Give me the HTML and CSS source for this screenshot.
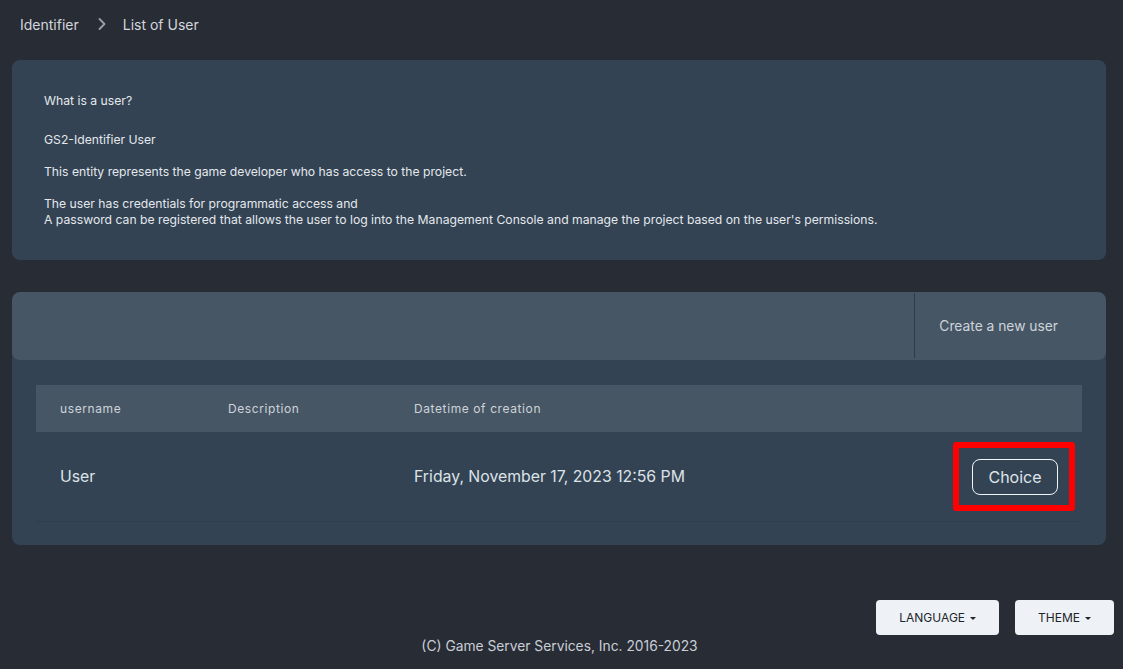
FILE: index.html
```html
<!DOCTYPE html>
<html lang="en">
<head>
    <meta charset="UTF-8">
    <meta name="viewport" content="width=device-width, initial-scale=1.0">
    <title>List of User</title>
    <link rel="stylesheet" href="styles.css">
</head>
<body>
    <!-- breadcrumb -->
    <nav class="breadcrumb">
        <span class="crumb">Identifier</span>
        <svg class="crumb-sep" width="10" height="14" viewBox="0 0 10 14">
            <path d="M2.5 2 L7.5 7 L2.5 12" fill="none" stroke="#9aa1aa" stroke-width="1.8" stroke-linecap="round" stroke-linejoin="round"/>
        </svg>
        <span class="crumb">List of User</span>
    </nav>

    <!-- description of the resource -->
    <section class="card info">
        <p class="info-title">What is a user?</p>
        <p>GS2-Identifier User</p>
        <p>This entity represents the game developer who has access to the project.</p>
        <p>The user has credentials for programmatic access and<br>A password can be registered that allows the user to log into the Management Console and manage the project based on the user's permissions.</p>
    </section>

    <!-- user list -->
    <section class="card list">
        <div class="list-head">
            <div class="list-head-space"></div>
            <div class="list-head-action">Create a new user</div>
        </div>
        <div class="list-body">
            <table class="users">
                <colgroup>
                    <col class="col-name">
                    <col class="col-desc">
                    <col class="col-date">
                    <col>
                </colgroup>
                <thead>
                    <tr>
                        <th>username</th>
                        <th>Description</th>
                        <th>Datetime of creation</th>
                        <th></th>
                    </tr>
                </thead>
                <tbody>
                    <tr>
                        <td>User</td>
                        <td></td>
                        <td>Friday, November 17, 2023 12:56 PM</td>
                        <td class="cell-action">
                            <span class="highlight"><button class="btn-choice">Choice</button></span>
                        </td>
                    </tr>
                </tbody>
            </table>
        </div>
    </section>

    <footer class="footer">
        <div class="footer-buttons">
            <button class="btn-light dropdown">LANGUAGE</button>
            <button class="btn-light dropdown">THEME</button>
        </div>
        <div class="copyright">(C) Game Server Services, Inc. 2016-2023</div>
    </footer>
</body>
</html>
```

FILE: styles.css
```css
body {
    margin: 0;
    padding: 0;
    background-color: #282c35;
    color: #e4e8ed;
    font-family: 'Inter', 'Noto Sans', sans-serif;
}

.breadcrumb {
    display: flex;
    align-items: center;
    height: 48px;
    padding: 0 20px;
    font-size: 14px;
    color: #d3d7dd;
}
.crumb-sep {
    margin: 0 16px 0 18px;
}

.card {
    background-color: #334353;
    border-radius: 8px;
    margin: 12px 17px 0 12px;
}

.info {
    padding: 32px 32px 32px;
    font-size: 12.2px;
    line-height: 16px;
}
.info p {
    margin: 0 0 16px;
}
.info p:last-child {
    margin-bottom: 0;
}
.info .info-title {
    margin-bottom: 23px;
    padding-top: 1px;
}

.list {
    margin-top: 32px;
    overflow: hidden;
}
.list-head {
    display: flex;
    height: 68px;
    background-color: #475665;
    border-radius: 8px;
}
.list-head-space {
    flex: 1;
    border-right: 1px solid #2e3b49;
    margin: 1px 0 2px;
}
.list-head-action {
    display: flex;
    align-items: center;
    padding: 0 48px 0 24px;
    font-size: 13.8px;
    color: #cdd4db;
}

.list-body {
    padding: 25px 24px 23px;
}

.users {
    width: 100%;
    border-collapse: collapse;
    table-layout: fixed;
}
.col-name { width: 168px; }
.col-desc { width: 186px; }
.col-date { width: 420px; }

.users th {
    height: 47px;
    padding: 0 24px;
    background-color: #475665;
    text-align: left;
    font-weight: 400;
    font-size: 12px;
    letter-spacing: 0.6px;
    color: #cdd3da;
}
.users td {
    height: 89px;
    padding: 0 24px;
    font-size: 15.8px;
    color: #dde2e8;
    border-bottom: 1px solid #2f3d4c;
}
.users .cell-action {
    padding-right: 7px;
    text-align: right;
}

/* red frame around the selected action */
.highlight {
    display: inline-block;
    padding: 11px 11px 10px 13px;
    border: 6px solid #ff0000;
    border-radius: 3px;
    line-height: 0;
}
.btn-choice {
    width: 86px;
    height: 36px;
    background: transparent;
    border: 1px solid #f2f4f7;
    border-radius: 8px;
    color: #dfe4ea;
    font-family: 'Inter', 'Noto Sans', sans-serif;
    font-size: 16px;
    cursor: pointer;
}

.footer {
    margin-top: 55px;
}
.footer-buttons {
    display: flex;
    justify-content: flex-end;
    gap: 16px;
    padding-right: 9px;
}
.btn-light {
    height: 35px;
    padding: 0 23px;
    background-color: #eef2f6;
    border: none;
    border-radius: 4px;
    color: #212529;
    font-family: 'Inter', 'Noto Sans', sans-serif;
    font-size: 12px;
    cursor: pointer;
}
.dropdown::after {
    content: "";
    display: inline-block;
    margin-left: 5px;
    vertical-align: 2px;
    border-top: 3px solid #212529;
    border-left: 3px solid transparent;
    border-right: 3px solid transparent;
}
.copyright {
    margin-top: 1px;
    text-align: center;
    padding-right: 4px;
    font-size: 13.8px;
    line-height: 20px;
    color: #c9ced5;
}
```
